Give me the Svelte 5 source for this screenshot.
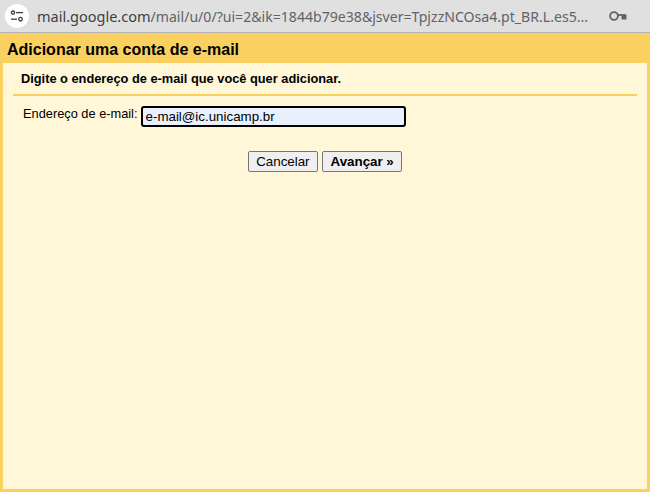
<script>
  let email = $state('e-mail@ic.unicamp.br');
</script>

<div class="page">
  <div class="bar">
    <div class="tune">
      <svg width="14" height="12" viewBox="0 0 14 12" fill="none" stroke="#3c4043" stroke-width="1.3">
        <circle cx="3" cy="2.600" r="1.600"/>
        <path d="M6 2.600h7"/>
        <path d="M1 9.200h6"/>
        <circle cx="10.500" cy="9.200" r="1.800"/>
      </svg>
    </div>
    <div class="url"><span class="host">mail.google.com</span>/mail/u/0/?ui=2&amp;ik=1844b79e38&amp;jsver=TpjzzNCOsa4.pt_BR.L.es5...</div>
    <svg class="key" width="18" height="12" viewBox="0 0 18 12" fill="none" stroke="#5f6368" stroke-width="1.800">
      <circle cx="5" cy="6" r="3.900"/>
      <path d="M8.800 5h8.200"/>
      <rect x="12.500" y="5" width="5" height="4.500" fill="#5f6368" stroke="none"/>
    </svg>
  </div>
  <div class="dialog">
    <h1>Adicionar uma conta de e-mail</h1>
    <div class="body">
      <div class="sub">Digite o endereço de e-mail que você quer adicionar.</div>
      <div class="row">
        <span class="label">Endereço de e-mail:</span>
        <input class="field" bind:value={email} />
      </div>
      <div class="actions">
        <button>Cancelar</button>
        <button class="next">Avançar »</button>
      </div>
    </div>
  </div>
</div>

<style>
  :global(body) { margin: 0; }
  .page { width: 650px; height: 492px; display: flex; flex-direction: column; overflow: hidden; font-family: "Liberation Sans", Arial, sans-serif; }
  .bar { height: 32px; flex: none; background: #e0e0e0; border-bottom: 1px solid #b4b4b8; display: flex; align-items: center; box-sizing: content-box; }
  .tune { width: 24px; height: 24px; border-radius: 50%; background: #fff; margin-left: 5px; display: flex; align-items: center; justify-content: center; flex: none; }
  .url { margin-left: 8px; width: 564px; font-family: "Noto Sans", sans-serif; font-size: 14.1px; color: #5f6368; white-space: nowrap; overflow: hidden; flex: none; }
  .host { color: #3c4043; font-size: 14.5px; }
  .key { margin-left: 8px; flex: none; }
  .dialog { flex: 1; min-height: 0; background: #fad060; padding: 0 3px 3px 3px; display: flex; flex-direction: column; }
  h1 { margin: 0; height: 30px; line-height: 34px; font-size: 16px; font-weight: bold; color: #000; padding-left: 4px; flex: none; }
  .body { flex: 1; background: #fff7d7; padding: 0 10px; }
  .sub { height: 31px; line-height: 31px; padding-left: 8px; font-size: 12.8px; font-weight: bold; color: #000; border-bottom: 2px solid #fad060; box-sizing: content-box; }
  .row { display: flex; align-items: flex-start; margin-top: 10px; padding-left: 10px; }
  .label { font-size: 12.8px; line-height: 16px; color: #000; }
  .field { width: 265px; height: 21px; box-sizing: border-box; margin: 0 0 0 3px; padding: 0 3px 0 2px; text-indent: 1px; border: 2px solid #000; border-radius: 3px; outline: none; background: #e8f0fe; font: 13.33px "Liberation Sans", Arial, sans-serif; color: #000; }
  .actions { display: flex; justify-content: center; gap: 4px; margin-top: 24px; }
  button { height: 21px; padding: 0 7.5px; border: 1px solid #767676; border-radius: 2px; background: #efefef; font: 13.33px "Liberation Sans", Arial, sans-serif; color: #000; }
  .next { font-weight: bold; }
</style>
